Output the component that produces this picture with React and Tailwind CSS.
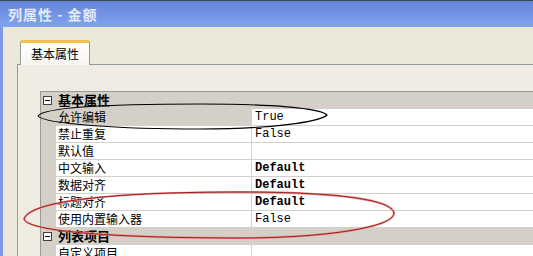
import React from "react";

const cjk = { fontFamily: '"Noto Sans CJK SC", "Liberation Sans", sans-serif' };
const mono = { fontFamily: '"Liberation Mono", "Noto Sans CJK SC", monospace' };

const rows = [
  { name: "允许编辑", value: "True", selected: true },
  { name: "禁止重复", value: "False" },
  { name: "默认值", value: "" },
  { name: "中文输入", value: "Default", bold: true },
  { name: "数据对齐", value: "Default", bold: true },
  { name: "标题对齐", value: "Default", bold: true },
  { name: "使用内置输入器", value: "False" },
];

const MinusBox = () => (
  <div className="w-[9px] h-[9px] border border-[#404040] bg-white flex items-center justify-center">
    <div className="w-[5px] h-px bg-black" />
  </div>
);

const Category = ({ label }) => (
  <div className="flex items-center h-[17px] bg-[#D4D0C8] border-b border-[#D4D0C8]">
    <div className="w-[15px] pl-[2px] flex items-center">
      <MinusBox />
    </div>
    <div className="pl-[2px] text-[13px] font-bold text-black leading-[16px]" style={cjk}>
      {label}
    </div>
  </div>
);

const Row = ({ name, value, bold, selected }) => (
  <div className="flex h-[17px] border-b border-[#D4D0C8]">
    <div className="w-[15px] bg-[#D4D0C8]" />
    <div
      className={`w-[196px] pl-[2px] border-r border-[#D4D0C8] text-[12px] leading-[16px] text-black ${
        selected ? "bg-[#D4D0C8]" : "bg-white"
      }`}
      style={cjk}
    >
      {name}
    </div>
    <div
      className={`flex-1 bg-white pl-[3px] text-[12px] leading-[16px] text-black ${bold ? "font-bold" : ""}`}
      style={mono}
    >
      {value}
    </div>
  </div>
);

const App = () => {
  return (
    <div className="relative w-[533px] h-[256px] overflow-hidden bg-[#ECE9D8] flex flex-col">
      {/* Title bar */}
      <div className="h-[27px] shrink-0 border-t border-[#3c4a4c] bg-gradient-to-b from-[#6485dc] via-[#7493e4] to-[#7fa4ee] flex items-center pl-[8px]">
        <span className="text-[14px] font-bold tracking-[1px] text-[#e3eaf8] whitespace-pre" style={cjk}>
          列属性 - 金额
        </span>
      </div>

      {/* Body */}
      <div className="flex-1 flex flex-col border-l-[3px] border-[#7e9ae0] pl-[14px] pt-[13px]">
        <div className="relative z-10 flex h-[25px] -mb-px pl-[3px]">
          <div className="w-[70px] h-[25px] rounded-t-[3px] border-t-[3px] border-x border-t-[#F3BE4C] border-x-[#919B9C] bg-gradient-to-b from-white to-[#F6F5F0] flex items-start justify-center pt-[3px]">
            <span className="text-[12px] text-black leading-[16px]" style={cjk}>
              基本属性
            </span>
          </div>
        </div>

        <div className="flex-1 border-t border-l border-[#919B9C] bg-[#EFEDE3] pl-[22px] pt-[26px]">
          <div className="border-t border-l border-[#9C9A94] bg-white">
            <Category label="基本属性" />
            {rows.map((r) => (
              <Row key={r.name} {...r} />
            ))}
            <Category label="列表项目" />
            <Row name="自定义项目" value="" />
          </div>
        </div>
      </div>

      {/* Hand-drawn annotations */}
      <svg className="absolute inset-0 pointer-events-none" width="533" height="256" viewBox="0 0 533 256">
        <path
          d="M38,116 C45,106 120,104 200,104 C270,104 320,108 327,115 C320,122 270,129 200,129 C120,129 45,124 38,116 Z"
          fill="none"
          stroke="#000"
          strokeWidth="1.1"
        />
        <path
          d="M24,219 C30,200 120,192 240,192 C340,192 392,200 394,213 C394,228 320,238 240,238 C120,238 28,232 24,219 Z"
          fill="none"
          stroke="#e89090"
          strokeWidth="2.2"
        />
        <path
          d="M24,219 C30,200 120,192 240,192 C340,192 392,200 394,213 C394,228 320,238 240,238 C120,238 28,232 24,219 Z"
          fill="none"
          stroke="#a01c1c"
          strokeWidth="1"
        />
      </svg>
    </div>
  );
};

export default App;
